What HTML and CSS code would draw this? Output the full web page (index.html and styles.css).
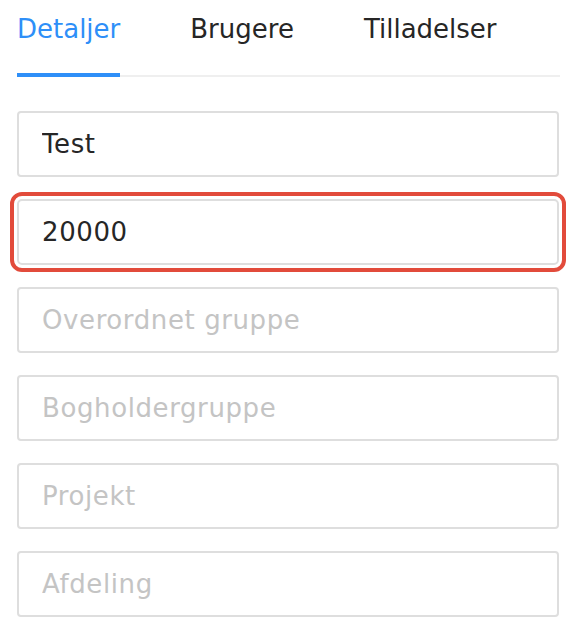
FILE: index.html
```html
<!DOCTYPE html>
<html lang="da">
<head>
<meta charset="utf-8">
<title>Gruppe</title>
<link rel="stylesheet" href="styles.css">
</head>
<body>
<div class="page">
  <nav class="tabs">
    <a class="tab active">Detaljer</a>
    <a class="tab">Brugere</a>
    <a class="tab">Tilladelser</a>
  </nav>
  <form class="fields">
    <div class="field"><input class="input" type="text" value="Test"></div>
    <div class="field highlighted"><input class="input" type="text" value="20000"></div>
    <div class="field"><input class="input" type="text" placeholder="Overordnet gruppe"></div>
    <div class="field"><input class="input" type="text" placeholder="Bogholdergruppe"></div>
    <div class="field"><input class="input" type="text" placeholder="Projekt"></div>
    <div class="field"><input class="input" type="text" placeholder="Afdeling"></div>
  </form>
</div>
</body>
</html>
```
FILE: styles.css
```css
html, body {
  margin: 0;
  padding: 0;
  background: #ffffff;
}
body {
  font-family: "DejaVu Sans", "Noto Sans", sans-serif;
  color: #262626;
}
.page {
  padding: 0 17px;
  width: 543px;
}
.tabs {
  display: flex;
  gap: 70px;
  border-bottom: 2px solid #efefef;
  padding-top: 14px;
}
.tab {
  font-size: 26px;
  line-height: 30px;
  padding-bottom: 29px;
  margin-bottom: -2px;
  border-bottom: 4px solid transparent;
  color: #262626;
  cursor: pointer;
}
.tab.active {
  color: #2e8ff8;
  border-bottom-color: #2e8ff8;
}
.fields {
  display: flex;
  flex-direction: column;
  gap: 22px;
  margin-top: 34px;
  width: 542px;
}
.field {
  display: flex;
}
.input {
  box-sizing: border-box;
  width: 100%;
  height: 66px;
  border: 2px solid #dedede;
  border-radius: 4px;
  padding: 0 0 0 23px;
  font-family: "DejaVu Sans", "Noto Sans", sans-serif;
  font-size: 26px;
  letter-spacing: 0.6px;
  color: #262626;
  background: #ffffff;
  outline: none;
}
.input::placeholder {
  color: #c4c4c4;
}
.highlighted .input {
  outline: 4px solid #e24b3b;
  outline-offset: 3px;
  border-radius: 5px;
}
```
